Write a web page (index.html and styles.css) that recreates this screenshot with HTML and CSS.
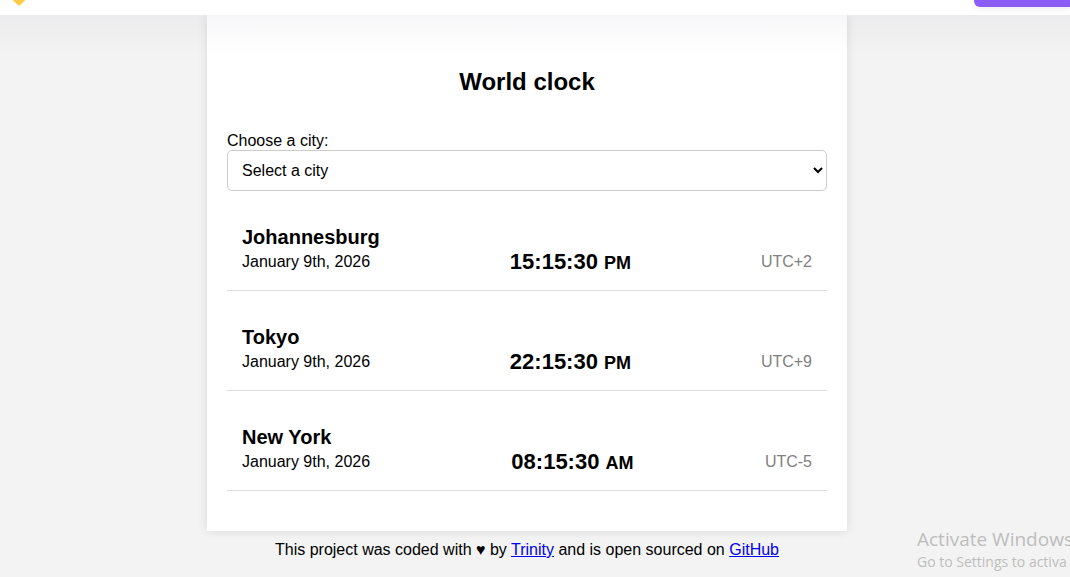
FILE: index.html
```html
<!DOCTYPE html>
<html lang="en">
<head>
  <meta charset="utf-8">
  <title>World clock</title>
  <link rel="stylesheet" href="styles.css">
</head>
<body>
  <header class="topbar">
    <svg class="topbar-mark" width="14" height="6" viewBox="0 0 14 6" aria-hidden="true"><path d="M0.5 0H13.5L7 6Z" fill="#ffcb47"/></svg>
    <button class="topbar-button" type="button" aria-label="Menu"></button>
  </header>
  <div class="page">
    <main class="card">
      <h1 class="title">World clock</h1>
      <label class="picker-label" for="city">Choose a city:</label>
      <select class="picker" id="city">
        <option>Select a city</option>
        <option>Johannesburg</option>
        <option>Tokyo</option>
        <option>New York</option>
      </select>
      <section class="city">
        <div class="place">
          <h2 class="name">Johannesburg</h2>
          <div class="date">January 9th, 2026</div>
        </div>
        <div class="time">15:15:30 <small class="period">PM</small></div>
        <div class="zone">UTC+2</div>
      </section>
      <section class="city">
        <div class="place">
          <h2 class="name">Tokyo</h2>
          <div class="date">January 9th, 2026</div>
        </div>
        <div class="time">22:15:30 <small class="period">PM</small></div>
        <div class="zone">UTC+9</div>
      </section>
      <section class="city">
        <div class="place">
          <h2 class="name">New York</h2>
          <div class="date">January 9th, 2026</div>
        </div>
        <div class="time">08:15:30 <small class="period">AM</small></div>
        <div class="zone">UTC-5</div>
      </section>
    </main>
    <footer class="credit">This project was coded with ♥ by <a href="#">Trinity</a> and is open sourced on <a href="#">GitHub</a></footer>
  </div>
  <aside class="watermark">
    <div class="watermark-title">Activate Windows</div>
    <div class="watermark-text">Go to Settings to activa</div>
  </aside>
</body>
</html>
```
FILE: styles.css
```css
* {
  box-sizing: border-box;
}

body {
  margin: 0;
  background: #f3f3f3;
  color: #000;
  font: 16px/18px "Liberation Sans", Arial, sans-serif;
  overflow: hidden;
}

.topbar {
  position: relative;
  z-index: 1;
  display: flex;
  align-items: flex-start;
  justify-content: space-between;
  height: 15px;
  padding-left: 12px;
  background: #fff;
}

/* Soft shade that falls from the bar onto the page */
.topbar::after {
  content: "";
  position: absolute;
  top: 100%;
  left: 0;
  right: 0;
  height: 40px;
  background: linear-gradient(rgba(30, 30, 80, 0.035), rgba(30, 30, 80, 0));
  pointer-events: none;
}

.topbar-button {
  width: 96px;
  height: 7px;
  padding: 0;
  border: 0;
  border-radius: 0 0 0 6px;
  background: #8b5cf6;
  box-shadow: 0 2px 6px rgba(0, 0, 0, 0.08);
}

.page {
  padding: 0 16px 18px 0;
}

.card {
  max-width: 640px;
  margin: 0 auto;
  padding: 53px 20px 40px;
  background: #fff;
  box-shadow: 0 0 10px rgba(0, 0, 0, 0.1);
}

.title {
  margin: 0 0 36px;
  font-size: 24px;
  line-height: 28px;
  text-align: center;
}

.picker-label {
  display: block;
}

.picker {
  display: block;
  width: 100%;
  height: 41px;
  padding: 10px;
  border: 1px solid #ccc;
  border-radius: 5px;
  background: #fff;
  color: #000;
  font: inherit;
}

.city {
  display: flex;
  align-items: flex-end;
  justify-content: space-between;
  height: 100px;
  padding: 0 15px 15px;
  border-bottom: 1px solid #ddd;
}

.place {
  min-width: 138px;
  padding-bottom: 4px;
}

.name {
  margin: 0 0 4px;
  font-size: 20px;
  line-height: 23px;
}

.time {
  font-size: 22px;
  font-weight: bold;
  line-height: 23px;
}

.period {
  font-size: 18px;
}

.zone {
  padding-bottom: 4px;
  color: #808080;
}

.credit {
  padding-top: 10px;
  text-align: center;
}

.watermark {
  position: absolute;
  right: 0;
  bottom: 4px;
  width: 153px;
  overflow: hidden;
  color: #bdbdbd;
  font-family: "Open Sans", "Noto Sans", sans-serif;
  white-space: nowrap;
}

.watermark-title {
  font-size: 19px;
  line-height: 24px;
}

.watermark-text {
  font-size: 14px;
  line-height: 22px;
}
```
